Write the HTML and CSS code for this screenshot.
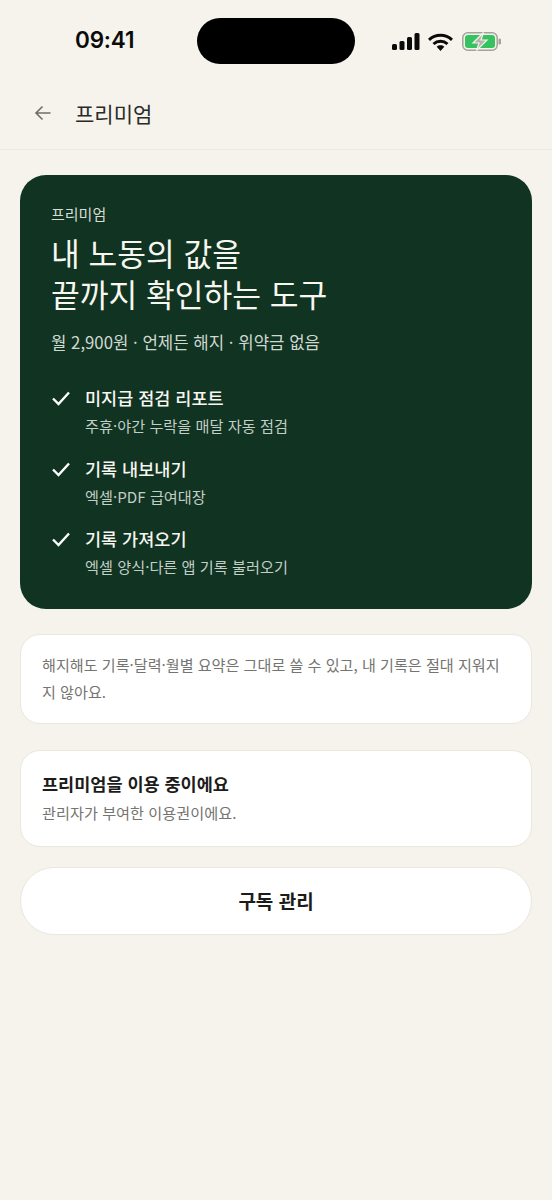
FILE: index.html
```html
<!DOCTYPE html>
<html lang="ko">
<head>
<meta charset="utf-8">
<title>프리미엄</title>
<link rel="stylesheet" href="styles.css">
</head>
<body>
<div class="status">
  <span class="time">09:41</span>
  <span class="island"></span>
  <span class="status-icons">
    <svg width="28" height="17" viewBox="0 0 28 17"><rect x="0" y="11" width="5" height="6" rx="1.5"/><rect x="7.5" y="8" width="5" height="9" rx="1.5"/><rect x="15" y="4" width="5" height="13" rx="1.5"/><rect x="22.5" y="0" width="5" height="17" rx="1.5"/></svg>
    <svg width="25" height="18" viewBox="0 0 25 18"><path d="M1 6.800C7.500 0.800 17.500 0.800 24 6.800" class="w"/><path d="M5.500 11C9.500 7.400 15.500 7.400 19.500 11" class="w"/><path d="M12.500 18l-3.800-4.300c2.100-1.800 5.500-1.800 7.600 0z"/></svg>
    <svg class="battery" width="40" height="19" viewBox="0 0 40 19"><rect x="0.800" y="0.800" width="34.400" height="17.400" rx="5" class="b-out"/><rect x="3" y="3" width="30" height="13" rx="3" class="b-in"/><rect x="36.500" y="6.500" width="2.500" height="6" rx="1.200" class="b-cap"/><path d="M21.500 0.500L11 11h6L14.500 18.500 25 8h-6z" class="b-bolt"/></svg>
  </span>
</div>
<header class="bar">
  <svg class="back" width="20" height="20" viewBox="0 0 20 20"><path d="M17.500 10H3M9.500 3.500L3 10l6.500 6.500"/></svg>
  <h1>프리미엄</h1>
</header>
<main class="content">
  <section class="hero">
    <p class="eyebrow">프리미엄</p>
    <h2>내 노동의 값을<br>끝까지 확인하는 도구</h2>
    <p class="price">월 2,900원 · 언제든 해지 · 위약금 없음</p>
    <ul class="features">
      <li>
        <svg class="check" width="20" height="20" viewBox="0 0 20 20"><path d="M2 10.500L7.500 16 18 4.500"/></svg>
        <div><strong>미지급 점검 리포트</strong><span>주휴·야간 누락을 매달 자동 점검</span></div>
      </li>
      <li>
        <svg class="check" width="20" height="20" viewBox="0 0 20 20"><path d="M2 10.500L7.500 16 18 4.500"/></svg>
        <div><strong>기록 내보내기</strong><span>엑셀·PDF 급여대장</span></div>
      </li>
      <li>
        <svg class="check" width="20" height="20" viewBox="0 0 20 20"><path d="M2 10.500L7.500 16 18 4.500"/></svg>
        <div><strong>기록 가져오기</strong><span>엑셀 양식·다른 앱 기록 불러오기</span></div>
      </li>
    </ul>
  </section>
  <section class="card note">해지해도 기록·달력·월별 요약은 그대로 쓸 수 있고, 내 기록은 절대 지워지지 않아요.</section>
  <section class="card plan">
    <strong>프리미엄을 이용 중이에요</strong>
    <span>관리자가 부여한 이용권이에요.</span>
  </section>
  <button class="manage">구독 관리</button>
</main>
</body>
</html>
```
FILE: styles.css
```css
* { box-sizing: border-box; margin: 0; padding: 0; }
html, body { height: 100%; }
body {
  background: #f6f3ec;
  font-family: "Noto Sans CJK KR", "Noto Sans", sans-serif;
  color: #1a1a1a;
  width: 552px;
  height: 1200px;
  overflow: hidden;
}
.status {
  height: 82px;
  display: grid;
  grid-template-columns: 197px 158px 1fr;
  align-items: start;
}
.time {
  font: 600 22.500px/30px "Inter", "Liberation Sans", sans-serif;
  padding: 25px 0 0 75px;
  color: #0b0b0b;
  letter-spacing: -0.2px;
}
.island {
  display: block;
  width: 158px;
  height: 46px;
  margin-top: 18px;
  background: #000;
  border-radius: 23px;
}
.status-icons {
  display: flex;
  align-items: center;
  gap: 8px;
  padding: 32px 0 0 37px;
}
.status-icons svg { fill: #0a0a0a; display: block; flex: none; }
.status-icons svg.battery { margin-left: 1px; }
.w { fill: none; stroke: #0a0a0a; stroke-width: 3; }
.b-out { fill: none; stroke: #a3a29b; stroke-width: 1.500; }
.b-in { fill: #35c25f; }
.b-cap { fill: #a3a29b; }
.status-icons .b-bolt { fill: #b5b3ac; stroke: #f6f3ec; stroke-width: 1.200; }
.bar {
  height: 68px;
  display: flex;
  align-items: center;
  gap: 22px;
  padding: 0 0 6px 33px;
  border-bottom: 1px solid #ece9e2;
}
.back { fill: none; stroke: #6f6f6a; stroke-width: 1.600; flex: none; }
.bar h1 {
  font-size: 21px;
  font-weight: 400;
  line-height: 28px;
  color: #2a2a28;
}
.content {
  padding: 25px 20px 0 20px;
  display: flex;
  flex-direction: column;
}
.hero {
  height: 434px;
  background: #103322;
  border-radius: 26px;
  padding: 28px 31px 0 31px;
  color: #fff;
}
.eyebrow { font-size: 15px; line-height: 22px; color: #d5dcd5; }
.hero h2 {
  margin-top: 7px;
  font-size: 31.250px;
  font-weight: 400;
  line-height: 41px;
  color: #f7f6f0;
}
.price { margin-top: 16px; font-size: 16.750px; line-height: 24px; color: #d0d9d1; }
.features { list-style: none; margin-top: 31px; display: flex; flex-direction: column; gap: 17.500px; }
.features li { display: flex; gap: 14px; }
.check { fill: none; stroke: #fff; stroke-width: 2.400; flex: none; margin-top: 3px; }
.features div { display: flex; flex-direction: column; gap: 1px; }
.features strong { font-size: 17.500px; font-weight: 500; line-height: 26px; color: #f7f6f0; }
.features span { font-size: 15.200px; line-height: 26px; color: #c3cec5; }
.card {
  background: #fff;
  border: 1px solid #e9e7e0;
  border-radius: 20px;
}
.note {
  margin-top: 25px;
  height: 90px;
  padding: 16px 20px 0 21px;
  font-size: 15.100px;
  line-height: 26.500px;
  color: #747470;
}
.plan {
  margin-top: 26px;
  height: 97px;
  padding: 19px 20px 0 21px;
  display: flex;
  flex-direction: column;
}
.plan strong { font-size: 17.500px; font-weight: 600; line-height: 28px; color: #1c1c1b; }
.plan span { font-size: 15.200px; line-height: 29px; color: #747470; }
.manage {
  margin-top: 20px;
  height: 68px;
  padding-bottom: 2px;
  background: #fff;
  border: 1px solid #e9e7e0;
  border-radius: 34px;
  font-family: inherit;
  font-size: 19px;
  font-weight: 600;
  color: #1c1c1b;
}
```
